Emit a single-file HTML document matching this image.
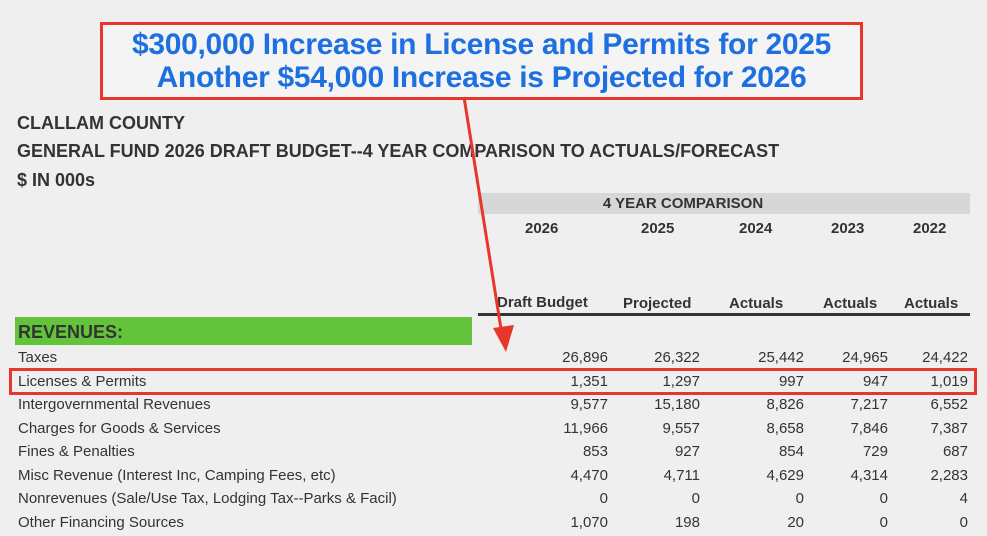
<!DOCTYPE html>
<html><head><meta charset="utf-8"><style>
body{margin:0;width:987px;height:536px;background:#efefef;position:relative;overflow:hidden;font-family:"Liberation Sans Narrow","Liberation Sans",sans-serif;color:#2a2a2a}
.a{position:absolute;white-space:nowrap}
.t{font-size:18px;font-weight:bold;color:#333}
.r{font-size:15px;line-height:18px;color:#333}
.n{text-align:right;width:80px}
.h{font-size:15px;font-weight:bold;color:#333}
</style></head><body>
<div class="a" style="left:100px;top:22px;width:757px;height:72px;border:3px solid #e8362a;background:#f4f4f4"></div>
<div class="a" style="left:100px;top:28px;width:763px;text-align:center;font-family:'Liberation Sans',sans-serif;font-weight:bold;font-size:30px;line-height:33px;color:#1e6fe0;letter-spacing:-0.3px">$300,000 Increase in License and Permits for 2025<br>Another $54,000 Increase is Projected for 2026</div>
<div class="a t" style="left:17px;top:113px">CLALLAM COUNTY</div>
<div class="a t" style="left:17px;top:141px">GENERAL FUND 2026 DRAFT BUDGET--4 YEAR COMPARISON TO ACTUALS/FORECAST</div>
<div class="a t" style="left:17px;top:170px">$ IN 000s</div>
<div class="a" style="left:478px;top:193px;width:492px;height:21px;background:#d6d7d9"></div>
<div class="a h" style="left:478px;top:195px;width:410px;text-align:center">4 YEAR COMPARISON</div>
<div class="a h" style="left:525px;top:220px">2026</div>
<div class="a h" style="left:641px;top:220px">2025</div>
<div class="a h" style="left:739px;top:220px">2024</div>
<div class="a h" style="left:831px;top:220px">2023</div>
<div class="a h" style="left:913px;top:220px">2022</div>
<div class="a h" style="left:497px;top:294px">Draft Budget</div>
<div class="a h" style="left:623px;top:295px">Projected</div>
<div class="a h" style="left:729px;top:295px">Actuals</div>
<div class="a h" style="left:823px;top:295px">Actuals</div>
<div class="a h" style="left:904px;top:295px">Actuals</div>
<div class="a" style="left:478px;top:313px;width:492px;height:3px;background:#333"></div>
<div class="a" style="left:15px;top:317px;width:457px;height:28px;background:#63c43c"></div>
<div class="a" style="left:18px;top:322px;font-size:18px;font-weight:bold;color:#333">REVENUES:</div>
<div class="a" style="left:9px;top:368px;width:962px;height:21px;border:3px solid #e8362a"></div>
<div id="rows"></div>
<svg class="a" style="left:0;top:0" width="987" height="536"><line x1="464" y1="97" x2="502" y2="335" stroke="#e8362a" stroke-width="3"/><polygon points="493,328 514,325 506,352" fill="#e8362a"/></svg>
<script>
var d=[["Taxes","26,896","26,322","25,442","24,965","24,422"],["Licenses & Permits","1,351","1,297","997","947","1,019"],["Intergovernmental Revenues","9,577","15,180","8,826","7,217","6,552"],["Charges for Goods & Services","11,966","9,557","8,658","7,846","7,387"],["Fines & Penalties","853","927","854","729","687"],["Misc Revenue (Interest Inc, Camping Fees, etc)","4,470","4,711","4,629","4,314","2,283"],["Nonrevenues (Sale/Use Tax, Lodging Tax--Parks & Facil)","0","0","0","0","4"],["Other Financing Sources","1,070","198","20","0","0"]];
var xs=[608,700,804,888,968],h="";
d.forEach(function(r,i){var y=349+i*23.5;h+='<div class="a r" style="left:18px;top:'+y+'px">'+r[0].replace("&","&amp;")+'</div>';for(var j=0;j<5;j++)h+='<div class="a r n" style="left:'+(xs[j]-80)+'px;top:'+y+'px">'+r[j+1]+'</div>';});
document.getElementById("rows").innerHTML=h;
</script>
</body></html>
